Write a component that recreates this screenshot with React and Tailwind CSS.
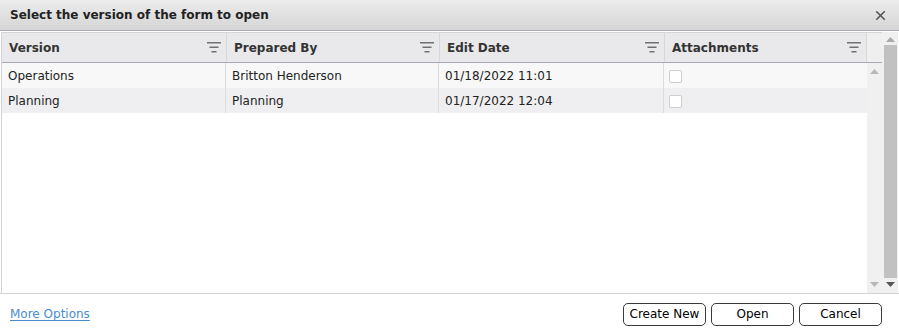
import { X } from 'lucide-react';

const columns = [
  { key: 'version', label: 'Version', width: 'w-[225px]' },
  { key: 'preparedBy', label: 'Prepared By', width: 'w-[213px]' },
  { key: 'editDate', label: 'Edit Date', width: 'w-[225px]' },
  { key: 'attachments', label: 'Attachments', width: 'w-[202px]' },
];

const rows = [
  { version: 'Operations', preparedBy: 'Britton Henderson', editDate: '01/18/2022 11:01' },
  { version: 'Planning', preparedBy: 'Planning', editDate: '01/17/2022 12:04' },
];

const FilterIcon = () => (
  <svg width="14" height="11" viewBox="0 0 14 11" className="shrink-0">
    <rect x="0" y="0" width="14" height="1.5" fill="#707070" />
    <rect x="2.5" y="4.5" width="9" height="1.5" fill="#707070" />
    <rect x="4.5" y="9" width="5" height="1.5" fill="#707070" />
  </svg>
);

const Arrow = ({ up, color = '#a6a6a6' }) => (
  <svg width="9" height="5" viewBox="0 0 9 5">
    <polygon points={up ? '0,5 9,5 4.5,0' : '0,0 9,0 4.5,5'} fill={color} />
  </svg>
);

const Checkbox = () => (
  <span className="block w-[13px] h-[13px] rounded-[2px] border border-[#cfcfcf] bg-white" />
);

const Button = ({ children }) => (
  <button className="w-[83px] h-[23px] rounded-[5px] border border-[#3a3a3a] bg-white text-[12px] text-black leading-none">
    {children}
  </button>
);

export default function App() {
  return (
    <div className="w-[899px] h-[331px] bg-white overflow-hidden text-[12px] text-[#222] font-['DejaVu_Sans',sans-serif]">
      {/* title bar */}
      <div className="h-[31px] flex items-center justify-between pl-[10px] pr-[11px] bg-gradient-to-b from-[#ececec] to-[#d5d5d5] border-b border-[#a7a7c2]">
        <span className="font-bold text-[12px] text-[#222]">Select the version of the form to open</span>
        <X size={15} strokeWidth={2.6} color="#555" />
      </div>

      <div className="h-[262px] mt-px flex border-b border-[#d4d4d4]">
        {/* grid */}
        <div className="w-[881px] flex flex-col border-l border-[#d4d4d4] ml-px border-t">
          <div className="h-[30px] flex bg-[#e9e9eb] border-b border-[#a9a9b6]">
            {columns.map((col) => (
              <div
                key={col.key}
                className={`${col.width} flex items-center justify-between pl-[7px] pr-[5px] border-r border-[#d8d8d8] font-bold text-[#333]`}
              >
                <span>{col.label}</span>
                <FilterIcon />
              </div>
            ))}
            <div className="flex-1 bg-[#efefef]" />
          </div>

          <div className="flex-1 flex">
            <div className="w-[865px] flex flex-col">
              {rows.map((row, i) => (
                <div key={i} className={`h-[25px] flex ${i % 2 === 0 ? 'bg-[#f8f8f8]' : 'bg-[#efeff1]'}`}>
                  <div className="w-[224px] flex items-center pl-[6px] border-r border-[#dcdcdc]">{row.version}</div>
                  <div className="w-[213px] flex items-center pl-[6px] border-r border-[#dcdcdc]">{row.preparedBy}</div>
                  <div className="w-[225px] flex items-center pl-[6px] border-r border-[#dcdcdc]">{row.editDate}</div>
                  <div className="flex-1 flex items-center pl-[5px] pt-[2px]">
                    <Checkbox />
                  </div>
                </div>
              ))}
            </div>
            {/* inner scrollbar */}
            <div className="flex-1 bg-[#f0f0f0] flex flex-col items-center justify-between pt-[6px] pb-[6px]">
              <Arrow up color="#b8b8b8" />
              <Arrow color="#b8b8b8" />
            </div>
          </div>
        </div>

        {/* outer scrollbar */}
        <div className="w-[16px] bg-[#f0f0f0] flex flex-col items-center pt-[5px] pb-[6px]">
          <Arrow up color="#a9a9a9" />
          <div className="w-[13px] flex-1 bg-[#c1c1c1] mt-[3px] mb-[4px]" />
          <Arrow color="#555" />
        </div>
        <div className="flex-1" />
      </div>

      {/* footer */}
      <div className="h-[37px] flex items-center justify-between pl-[10px] pr-[17px] pt-[3px]">
        <a href="#" className="text-[#4a8bcf] underline underline-offset-2">More Options</a>
        <div className="flex gap-[5px]">
          <Button>Create New</Button>
          <Button>Open</Button>
          <Button>Cancel</Button>
        </div>
      </div>
    </div>
  );
}
